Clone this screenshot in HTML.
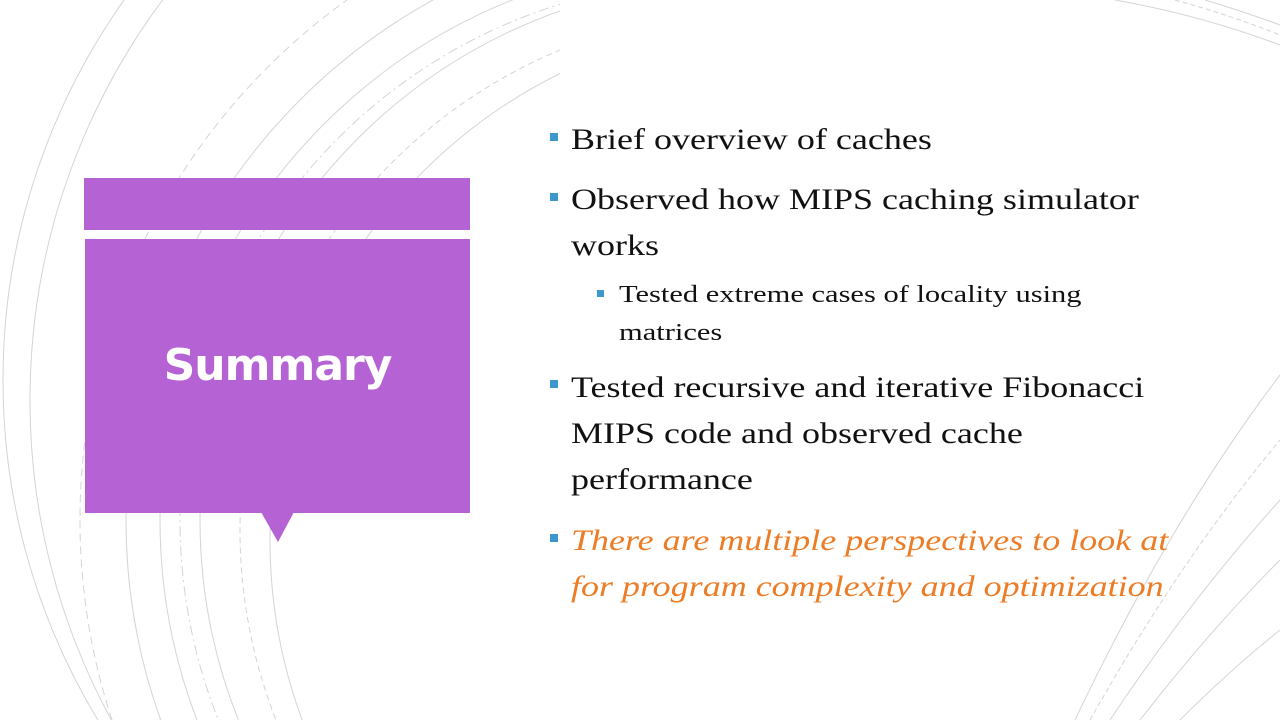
<!DOCTYPE html>
<html><head><meta charset="utf-8"><style>
body{margin:0;width:1280px;height:720px;overflow:hidden;background:#fff;position:relative;font-family:"Liberation Serif",serif}
.bar{position:absolute;background:#B462D4}
.t{position:absolute;font-size:30px;color:#111;line-height:46px;transform:scaleX(1.2);transform-origin:0 0;white-space:nowrap}
.s{position:absolute;font-size:24px;color:#111;line-height:38px;transform:scaleX(1.27);transform-origin:0 0;white-space:nowrap}
.b{position:absolute;width:8px;height:8px;background:#3C97CD}
</style></head><body>
<svg width="1280" height="720" style="position:absolute;left:0;top:0" fill="none" stroke="#d4d4d4" stroke-width="1">
<defs><clipPath id="c"><rect x="0" y="0" width="560" height="720"/></clipPath></defs>
<g clip-path="url(#c)">
<circle cx="660" cy="380" r="657"/>
<circle cx="700" cy="400" r="670"/>
<circle cx="720" cy="520" r="640" stroke-dasharray="8 5"/>
<circle cx="720" cy="520" r="594"/>
<circle cx="720" cy="520" r="560"/>
<circle cx="720" cy="520" r="540" stroke-dasharray="10 4 2 4"/>
<circle cx="740" cy="520" r="540"/>
<circle cx="760" cy="530" r="520" stroke-dasharray="6 4"/>
<circle cx="790" cy="540" r="520"/>
</g>
<path d="M1115,0 Q1200,15 1280,45"/>
<path d="M1175,0 Q1230,15 1280,35" stroke-dasharray="5 3"/>
<path d="M1205,0 Q1245,12 1280,25"/>
<path d="M1075,720 Q1170,520 1280,375"/>
<path d="M1090,720 Q1180,560 1280,440" stroke-dasharray="5 3"/>
<path d="M1110,720 Q1190,600 1280,500"/>
<path d="M1140,720 Q1210,630 1280,560"/>
<path d="M1180,720 Q1230,670 1280,630"/>
</svg>
<div class="bar" style="left:84px;top:178px;width:386px;height:52px"></div>
<div class="bar" style="left:85px;top:239px;width:385px;height:274px"></div>
<svg width="40" height="32" style="position:absolute;left:258px;top:512px"><polygon points="3,0 36,0 20,30" fill="#B462D4"/></svg>
<div style="position:absolute;left:85px;top:340px;width:385px;text-align:center;color:#fff;font-family:'DejaVu Sans',sans-serif;font-weight:bold;font-size:44px;letter-spacing:-1px">Summary</div>
<div class="b" style="left:550px;top:133px"></div>
<div class="t" style="left:571px;top:117px">Brief overview of caches</div>
<div class="b" style="left:550px;top:193px"></div>
<div class="t" style="left:571px;top:177px">Observed how MIPS caching simulator<br>works</div>
<div class="b" style="left:597px;top:290px;width:7px;height:7px"></div>
<div class="s" style="left:619px;top:276px">Tested extreme cases of locality using<br>matrices</div>
<div class="b" style="left:550px;top:380px"></div>
<div class="t" style="left:571px;top:365px">Tested recursive and iterative Fibonacci<br>MIPS code and observed cache<br>performance</div>
<div class="b" style="left:550px;top:534px"></div>
<div class="t" style="left:571px;top:518px;color:#EC7C26;font-style:italic">There are multiple perspectives to look at<br>for program complexity and optimization</div>
</body></html>
